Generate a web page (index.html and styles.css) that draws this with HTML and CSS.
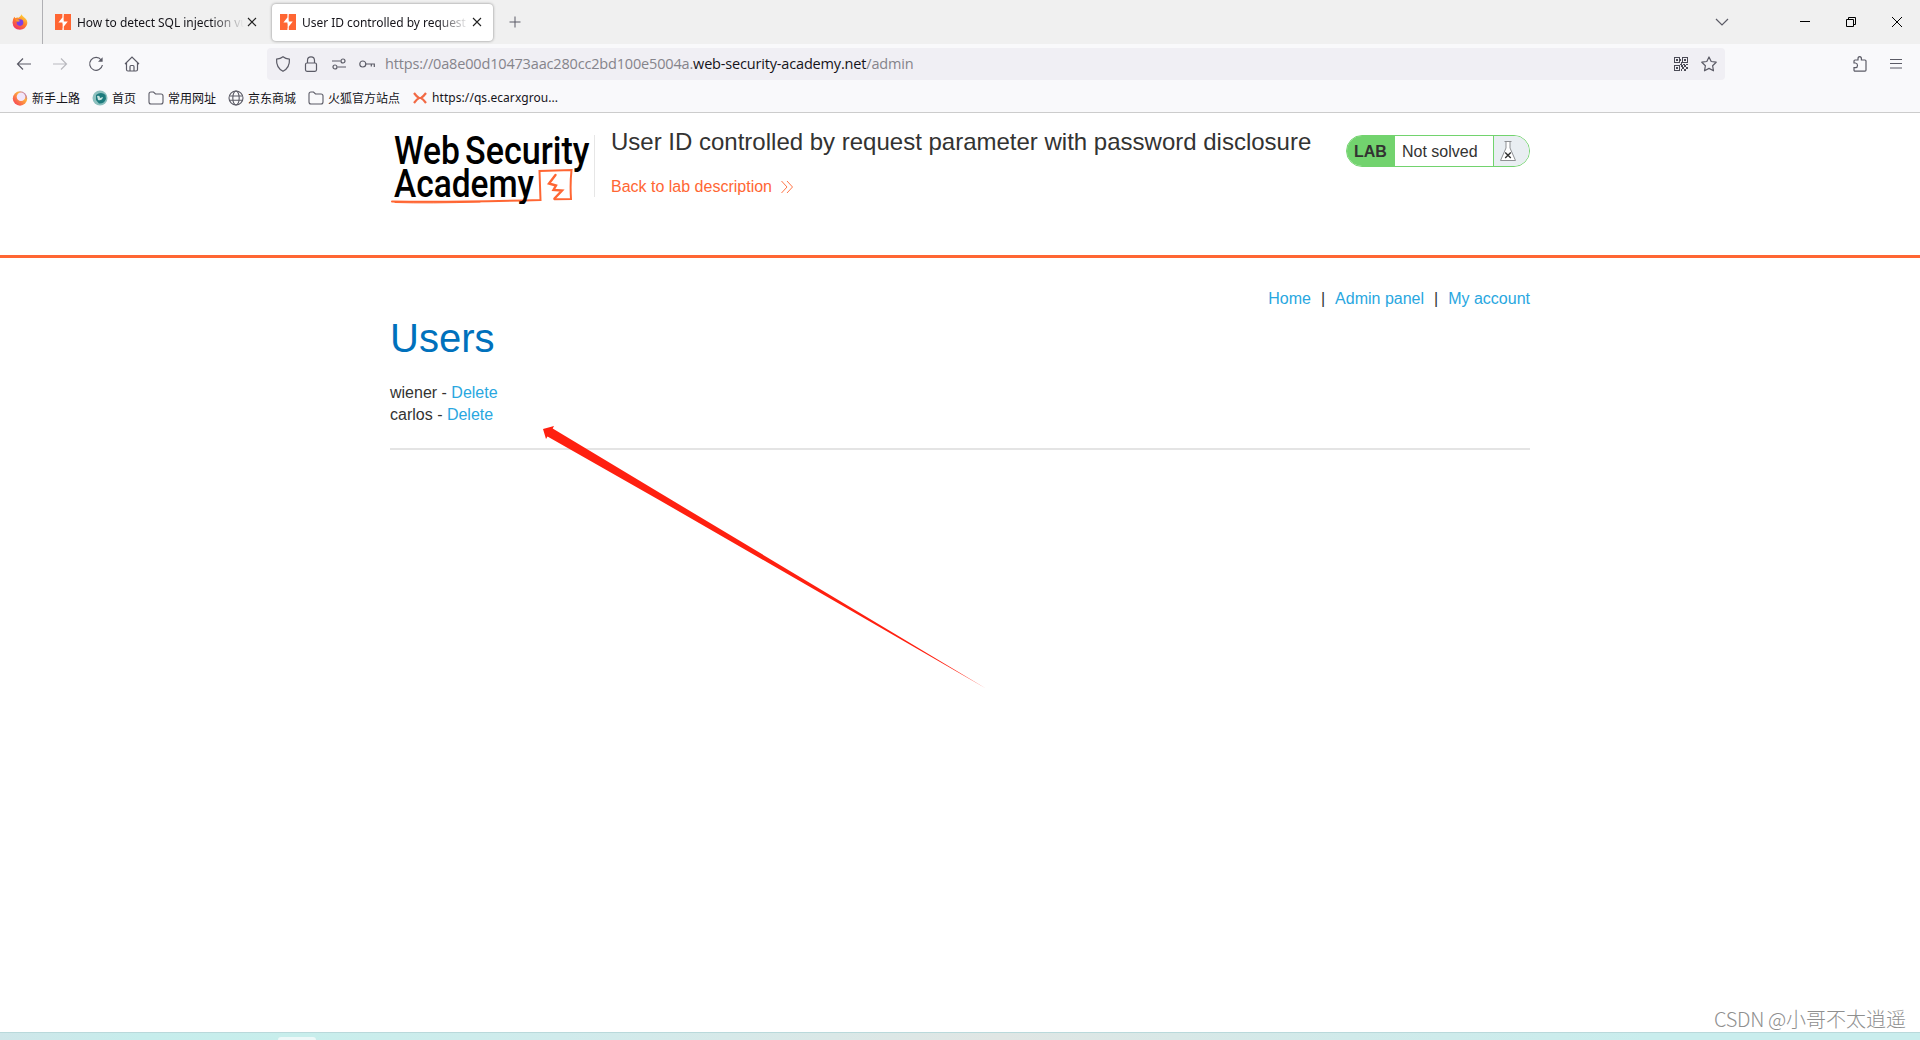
FILE: index.html
```html
<!DOCTYPE html>
<html lang="zh-CN">
<head>
  <meta charset="UTF-8" />
  <title>User ID controlled by request parameter with password disclosure</title>
  <link rel="stylesheet" href="styles.css">
</head>
<body>
<!-- shared icons -->
<svg class="defs" width="0" height="0">
  <defs>
    <linearGradient id="fire" x1="0.8" y1="0" x2="0.2" y2="1">
      <stop offset="0" stop-color="#ffe23c" />
      <stop offset="0.5" stop-color="#ff7a2a" />
      <stop offset="1" stop-color="#f02a6c" />
    </linearGradient>
    <linearGradient id="ring" x1="1" y1="0" x2="0" y2="1">
      <stop offset="0" stop-color="#8a4bff" />
      <stop offset="0.35" stop-color="#ffb03a" />
      <stop offset="1" stop-color="#f5305c" />
    </linearGradient>
  </defs>
  <symbol id="burp" viewBox="0 0 16 16">
    <rect width="16" height="16" fill="#ff6633" />
    <path d="M8.8 0 H7.4 V3.6 L3.4 8.6 H7.4 V16 H8.8 V12.4 L12.8 7.4 H8.8 Z" fill="#fff" />
    <path d="M8.8 1.5 L12 5.5 L8.8 6.2 Z M7.4 14.5 L4.2 10.5 L7.4 9.8 Z" fill="#ff6633" />
  </symbol>
  <symbol id="close" viewBox="0 0 10 10">
    <path d="M1 1 L9 9 M9 1 L1 9" stroke="#222" stroke-width="1.1" />
  </symbol>
  <symbol id="folder" viewBox="0 0 16 16">
    <path d="M1 4 Q1 2 3 2 H5.5 L7.5 4 H13 Q15 4 15 6 V12 Q15 14 13 14 H3 Q1 14 1 12 Z" fill="none" stroke="#5b5b66" stroke-width="1.1" />
  </symbol>
</svg>

<div class="tabstrip">
  <div class="firefox-view">
    <svg width="16" height="16" viewBox="0 0 16 16">
      <path d="M9.5 0.3 Q10 2 12 3.2 Q16 6 15.2 10 Q13.5 15.6 8 15.7 Q1 15.5 0.5 8.5 Q0.6 5 2.4 2.8 L3.4 4.2 Q5 3.2 6.6 3.8 Q8.6 2.8 9.5 0.3 Z" fill="url(#fire)" />
      <circle cx="8" cy="8.6" r="3.3" fill="#7b3fe4" />
      <path d="M3 5.5 Q6 4.5 8 7 Q6.5 8 5 7.5 Z" fill="#ff9a2a" />
    </svg>
  </div>
  <div class="tab">
    <svg class="favicon"><use href="#burp" /></svg>
    <span class="tab-label">How to detect SQL injection vulnerabilities</span>
    <svg class="tab-close"><use href="#close" /></svg>
  </div>
  <div class="tab active">
    <svg class="favicon"><use href="#burp" /></svg>
    <span class="tab-label">User ID controlled by request parameter</span>
    <svg class="tab-close"><use href="#close" /></svg>
  </div>
  <svg class="new-tab" width="12" height="12" viewBox="0 0 12 12"><path d="M6 0.5 V11.5 M0.5 6 H11.5" stroke="#5b5b66" /></svg>
  <div class="window-controls">
    <svg width="14" height="14" viewBox="0 0 14 14"><path d="M1 4 L7 10 L13 4" fill="none" stroke="#5b5b66" stroke-width="1.2" /></svg>
    <svg class="minimize" width="10" height="10" viewBox="0 0 10 10"><path d="M0 4.5 H10" stroke="#000" /></svg>
    <svg width="10" height="10" viewBox="0 0 10 10"><path d="M0.5 2.5 H7.5 V9.5 H0.5 Z M2.5 2.5 V0.5 H9.5 V7.5 H7.5" fill="none" stroke="#000" /></svg>
    <svg width="10" height="10" viewBox="0 0 10 10"><path d="M0 0 L10 10 M10 0 L0 10" stroke="#000" /></svg>
  </div>
</div>

<div class="toolbar">
  <div class="nav-buttons">
    <svg viewBox="0 0 16 16"><path d="M15 8 H1.5 M7 2.5 L1.5 8 L7 13.5" /></svg>
    <svg class="disabled" viewBox="0 0 16 16"><path d="M1 8 H14.5 M9 2.5 L14.5 8 L9 13.5" /></svg>
    <svg viewBox="0 0 16 16"><path d="M13.2 4 A6.4 6.4 0 1 0 14.4 9" /><path d="M14.6 1.2 V5.8 H10 Z" fill="#5b5b66" stroke="none" /></svg>
    <svg viewBox="0 0 16 16"><path d="M1 8 L8 1 L15 8 M2.5 7 V13.5 Q2.5 15 4 15 H12 Q13.5 15 13.5 13.5 V7 M6 15 V10.8 Q6 9.5 7 9.5 H9 Q10 9.5 10 10.8 V15" /></svg>
  </div>
  <div class="urlbar">
    <div class="url-icons">
      <svg viewBox="0 0 16 16"><path d="M8 0.8 Q10.5 2.7 14.4 3.2 Q15 11.5 8 15.3 Q1 11.5 1.6 3.2 Q5.5 2.7 8 0.8 Z" /></svg>
      <svg viewBox="0 0 16 16"><rect x="2.5" y="7" width="11" height="8.3" rx="1.5" /><path d="M4.5 7 V4.5 Q4.5 0.8 8 0.8 Q11.5 0.8 11.5 4.5 V7" /></svg>
      <svg viewBox="0 0 16 16"><path d="M1 5 H9.5 M6.5 11 H15" /><circle cx="12" cy="5" r="2" /><circle cx="4" cy="11" r="2" /></svg>
      <svg viewBox="0 0 16 16"><circle cx="3.8" cy="8" r="3" /><path d="M7 8 H15.3 V11 M12.3 8 V10.5" /></svg>
    </div>
    <div class="url"><span>https://0a8e00d10473aac280cc2bd100e5004a.</span><b>web-security-academy.net</b><span>/admin</span></div>
    <div class="page-actions">
      <svg class="qr" width="14" height="14" viewBox="0 0 14 14" shape-rendering="crispEdges">
        <path d="M0 0h6v6h-6z M1 1v4h4v-4z M2 2h2v2h-2z M8 0h6v6h-6z M9 1v4h4v-4z M10 2h2v2h-2z M0 8h6v6h-6z M1 9v4h4v-4z M2 10h2v2h-2z M6 2h1v2h-1z M7 5h1v2h-1z M6 7h2v1h-2z M9 7h2v1h-2z M12 7h2v1h-2z M7 8h2v2h-2z M10 8h2v2h-2z M12 10h2v2h-2z M8 10h2v2h-2z M7 12h1v2h-1z M10 12h2v2h-2z" fill-rule="evenodd" />
      </svg>
      <svg width="16" height="16" viewBox="0 0 16 16"><path d="M8 1 L10.2 5.5 L15.2 6.2 L11.6 9.7 L12.5 14.8 L8 12.4 L3.5 14.8 L4.4 9.7 L0.8 6.2 L5.8 5.5 Z" stroke-linejoin="round" /></svg>
    </div>
  </div>
  <div class="tool-buttons">
    <svg width="16" height="16" viewBox="0 0 16 16"><path d="M2 7 V5 Q2 4 3 4 H6 V2.8 Q6 0.7 7.7 0.7 Q9.4 0.7 9.4 2.8 V4 H13 Q14 4 14 5 V14 Q14 15.2 13 15.2 H3 Q2 15.2 2 14 V11.7 H3.5 Q5.5 11.5 5.5 9.4 Q5.5 7.3 3.5 7 Z" /></svg>
    <svg width="12" height="12" viewBox="0 0 12 12"><path d="M0 1.5 H12 M0 5.5 H12 M0 10 H12" /></svg>
  </div>
</div>

<div class="bookmarks">
  <div class="bookmark">
    <svg viewBox="0 0 16 16"><circle cx="8" cy="8.5" r="7.2" fill="url(#ring)" /><circle cx="9" cy="6.8" r="4.3" fill="#f1e6fb" /></svg>
    <span>新手上路</span>
  </div>
  <div class="bookmark">
    <svg viewBox="0 0 16 16"><circle cx="8" cy="8" r="7.5" fill="#8cc0be" /><path d="M4 5 Q9 1 13.5 5 L14 9 Q12 14 7 13.5 L4 10 Z" fill="#1c7b7d" /><path d="M5 6 Q8 5 8 8 L11 7 Q10 11 6 10 Z" fill="#c9e5e1" /></svg>
    <span>首页</span>
  </div>
  <div class="bookmark"><svg><use href="#folder" /></svg><span>常用网址</span></div>
  <div class="bookmark">
    <svg viewBox="0 0 16 16"><g fill="none" stroke="#5b5b66" stroke-width="1.1"><circle cx="8" cy="8" r="7" /><ellipse cx="8" cy="8" rx="3.2" ry="7" /><path d="M1.5 6 H14.5 M1.5 10.2 H14.5" /></g></svg>
    <span>京东商城</span>
  </div>
  <div class="bookmark"><svg><use href="#folder" /></svg><span>火狐官方站点</span></div>
  <div class="bookmark">
    <svg viewBox="0 0 16 16"><path d="M2 3 Q5 7 7 8 Q5 9 2 13 M14 3 Q11 7 9 8 Q11 9 14 13" fill="none" stroke="#f26a45" stroke-width="2.2" /></svg>
    <span class="latin">https://qs.ecarxgrou...</span>
  </div>
</div>

<header class="lab-header">
  <div class="container header-row">
    <svg class="logo" width="204" height="74" viewBox="0 0 204 74">
      <g fill="none" stroke="#ff6633" stroke-linecap="round">
        <path d="M2 71.5 Q60 72.5 150.5 70 L149.5 41 L181.5 40 Q180 54 181 69 L164.5 69.3" stroke-width="2" />
        <path d="M5 72.5 Q40 73.5 90 72" stroke-width="1" />
        <path d="M165.5 45 L159 53.5 L166 55.5 L163.5 60 L172 60.5 L164.5 68.5" stroke-width="2.4" />
      </g>
      <text x="4" y="34" textLength="66" lengthAdjust="spacingAndGlyphs">Web</text>
      <text x="75" y="34" textLength="124.5" lengthAdjust="spacingAndGlyphs">Security</text>
      <text x="4" y="66.5" textLength="140" lengthAdjust="spacingAndGlyphs">Academy</text>
    </svg>
    <div class="title">
      <h2>User ID controlled by request parameter with password disclosure</h2>
      <a class="back" href="#">Back to lab description
        <svg width="12" height="12" viewBox="0 0 12 12"><path d="M0.5 0 L6 6 L0.5 12 M6 0 L11.5 6 L6 12" fill="none" stroke="#ff6633" stroke-width="0.9" /></svg>
      </a>
    </div>
    <div class="lab-status">
      <span class="lab-tag">LAB</span>
      <span class="lab-text">Not solved</span>
      <span class="lab-flask">
        <svg width="16" height="20" viewBox="0 0 16 20"><path d="M4.5 0.5 H11.5 M6 0.5 V7 L0.5 19.5 H15.5 L10 7 V0.5" fill="#fff" stroke="#8f9194" /><path d="M5.2 11.5 L10.8 17 M10.8 11.5 L5.2 17" stroke="#333" stroke-width="1.4" /></svg>
      </span>
    </div>
  </div>
</header>

<main class="container">
  <nav class="top-links">
    <a href="#">Home</a><span>|</span><a href="#">Admin panel</a><span>|</span><a href="#">My account</a>
  </nav>
  <h1>Users</h1>
  <div class="user">wiener - <a href="#">Delete</a></div>
  <div class="user">carlos - <a href="#">Delete</a></div>
  <hr>
</main>

<svg class="arrow" width="446" height="264" viewBox="0 0 446 264">
  <path d="M0 2 L11 -1 L9.7 1.5 L117 66 L443 261.5 L117 73.5 L4.5 9.5 L3 12 Z" fill="#ff2010" />
</svg>

<div class="watermark"><span>CSDN @</span>小哥不太逍遥</div>
<div class="taskbar"><div class="taskbar-item"></div></div>
</body>
</html>
```

FILE: styles.css
```css
body {
  margin: 0;
  height: 1040px;
  display: flex;
  flex-direction: column;
  position: relative;
  overflow: hidden;
  background: #fff;
  color: #333332;
  font-family: "Liberation Sans", Arial, sans-serif;
  font-size: 16px;
}

a {
  color: #29a7df;
  text-decoration: none;
}

.defs {
  position: absolute;
}

/* Browser chrome */
.tabstrip {
  display: flex;
  align-items: center;
  height: 44px;
  background: #f0f0f0;
  font-family: "Noto Sans", "Noto Sans CJK SC", sans-serif;
  font-size: 12px;
  color: #15141a;
}

.firefox-view {
  width: 43px;
  height: 44px;
  padding-left: 12px;
  box-sizing: border-box;
  border-right: 1px solid #b0b0b4;
  display: flex;
  align-items: center;
}

.tab {
  width: 221px;
  height: 37px;
  margin-left: 4px;
  padding: 0 11px 0 8px;
  box-sizing: border-box;
  display: flex;
  align-items: center;
  border-radius: 4px;
}

.tab.active {
  background: #fff;
  box-shadow: 0 0 3px rgba(0, 0, 0, 0.45);
}

.favicon {
  width: 16px;
  height: 16px;
  flex-shrink: 0;
}

.tab-label {
  flex: 1;
  margin-left: 6px;
  margin-right: 3px;
  white-space: nowrap;
  overflow: hidden;
  letter-spacing: -0.04px;
  mask-image: linear-gradient(to left, transparent, #000 32px);
}

.tab-close {
  width: 10px;
  height: 10px;
  flex-shrink: 0;
}

.new-tab {
  margin-left: 16px;
}

.window-controls {
  margin-left: auto;
  padding-right: 18px;
  display: flex;
  align-items: center;
  gap: 36px;
}

.minimize {
  margin-left: 35px;
}

.toolbar {
  display: flex;
  align-items: center;
  height: 40px;
  background: #f9f9fb;
}

.toolbar svg {
  fill: none;
  stroke: #5b5b66;
  stroke-width: 1.2;
}

.nav-buttons {
  display: flex;
  gap: 20px;
  padding-left: 16px;
}

.nav-buttons svg,
.url-icons svg {
  width: 16px;
  height: 16px;
}

.toolbar .disabled {
  opacity: 0.4;
}

.urlbar {
  width: 1458px;
  height: 32px;
  margin-left: 127px;
  padding: 0 8px;
  box-sizing: border-box;
  display: flex;
  align-items: center;
  background: #f0eff4;
  border-radius: 4px;
}

.url-icons {
  display: flex;
  gap: 12px;
}

.url {
  margin-left: 10px;
  padding-bottom: 2px;
  font-family: "Open Sans", "Noto Sans", sans-serif;
  font-size: 14.5px;
  letter-spacing: -0.17px;
  color: #85848b;
  white-space: nowrap;
}

.url b {
  font-weight: normal;
  color: #15141a;
}

.page-actions {
  margin-left: auto;
  display: flex;
  align-items: center;
  gap: 13px;
}

.toolbar .qr {
  fill: #4a4a55;
  stroke: none;
}

.tool-buttons {
  margin-left: auto;
  padding-right: 18px;
  display: flex;
  align-items: center;
  gap: 22px;
}

.bookmarks {
  display: flex;
  gap: 12px;
  height: 28px;
  padding-left: 12px;
  background: #f9f9fb;
  border-bottom: 1px solid #cccccc;
  font-family: "Noto Sans CJK SC", sans-serif;
  font-size: 12px;
  color: #15141a;
}

.bookmark {
  display: flex;
  align-items: center;
  gap: 4px;
}

.bookmark svg {
  width: 16px;
  height: 16px;
}

.bookmark span {
  padding-bottom: 1px;
}

.latin {
  font-family: "Noto Sans", sans-serif;
  letter-spacing: 0.06px;
}

/* Lab page */
.container {
  width: 1140px;
  margin: 0 auto;
}

.lab-header {
  height: 142px;
  border-bottom: 3px solid #ff6633;
}

.header-row {
  display: flex;
  padding-top: 17px;
}

.logo {
  font-family: Roboto, sans-serif;
  font-size: 38.5px;
  font-weight: 500;
  fill: #000;
}

.title {
  margin-top: 5px;
  height: 62px;
  padding-left: 16px;
  border-left: 1px solid #e6e6e6;
}

.title h2 {
  margin: -7px 0 0;
  font-size: 24px;
  line-height: 28px;
  font-weight: normal;
  white-space: nowrap;
}

.back {
  display: flex;
  align-items: center;
  gap: 9px;
  margin-top: 22px;
  line-height: 18px;
  color: #ff6633;
}

.lab-status {
  width: 184px;
  height: 32px;
  margin: 5px 0 0 auto;
  box-sizing: border-box;
  display: flex;
  border: 1px solid #72d36e;
  border-radius: 16px;
  overflow: hidden;
  line-height: 31px;
}

.lab-tag {
  width: 48px;
  padding-left: 7px;
  box-sizing: border-box;
  background: #72d36e;
  font-weight: bold;
}

.lab-text {
  flex: 1;
  padding-left: 7px;
}

.lab-flask {
  width: 36px;
  padding-left: 6px;
  box-sizing: border-box;
  display: flex;
  align-items: center;
  background: #e9eef2;
  border-left: 1px solid #72d36e;
}

.top-links {
  display: flex;
  justify-content: flex-end;
  padding-top: 32px;
  line-height: 18px;
}

.top-links span {
  margin: 0 10px;
}

h1 {
  margin: 6px 0 20px;
  color: #0071bc;
  font-size: 40px;
  line-height: 48px;
  font-weight: normal;
}

.user {
  line-height: 22px;
}

hr {
  margin: 22px 0 0;
  border: none;
  height: 2px;
  background: #e4e4e4;
}

.arrow {
  position: absolute;
  left: 543px;
  top: 427px;
  overflow: visible;
}

.watermark {
  position: absolute;
  right: 14px;
  top: 1005px;
  font-family: "Noto Sans CJK SC", sans-serif;
  font-size: 20px;
  line-height: 28px;
  color: #8f8f8f;
  font-weight: 300;
}

.watermark span {
  letter-spacing: -0.3px;
}

.taskbar {
  height: 8px;
  margin-top: auto;
  box-sizing: border-box;
  border-top: 1px solid #b9d9db;
  background: linear-gradient(to right, #cfe6e9, #c6edec 140px, #c8eeec 300px, #d0ebec 560px, #e0e6e4 1000px, #d0eaea 1350px, #c9eded 1650px);
}

.taskbar-item {
  width: 38px;
  height: 3px;
  margin: 4px 0 0 278px;
  border-radius: 3px 3px 0 0;
  background: #edf8f8;
}
```
